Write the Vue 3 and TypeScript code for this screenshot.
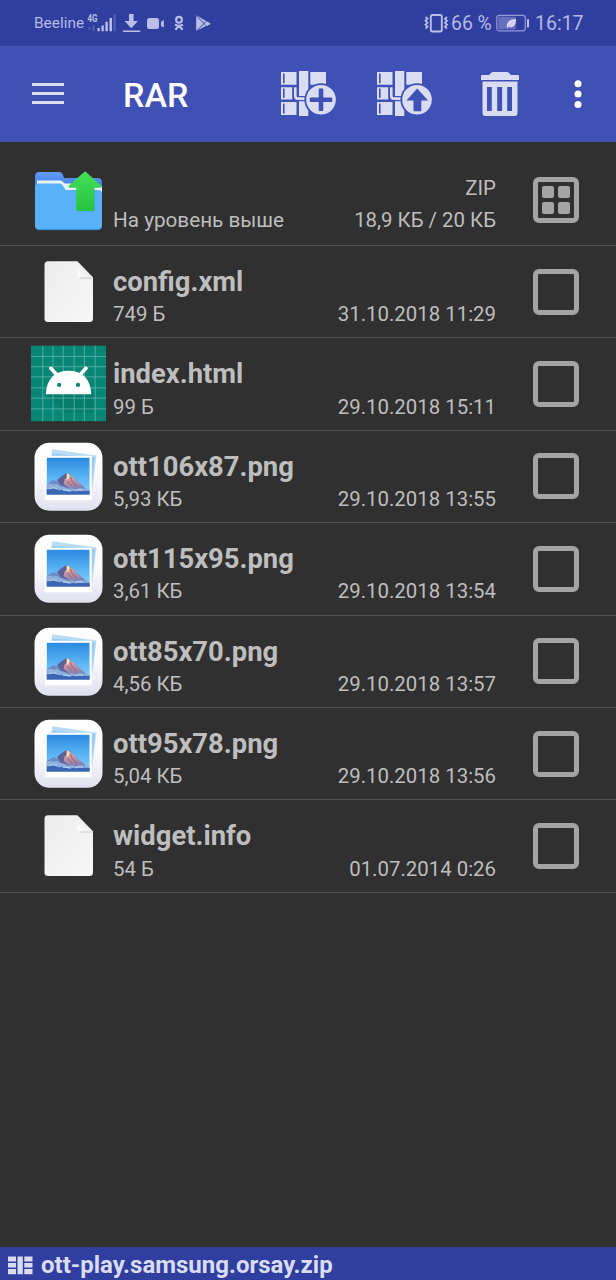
<script setup lang="ts">
type Kind = 'folder' | 'file' | 'android' | 'photo'

interface Entry {
  kind: Kind
  name: string
  size: string
  info: string
}

const entries: Entry[] = [
  { kind: 'file', name: 'config.xml', size: '749 Б', info: '31.10.2018 11:29' },
  { kind: 'android', name: 'index.html', size: '99 Б', info: '29.10.2018 15:11' },
  { kind: 'photo', name: 'ott106x87.png', size: '5,93 КБ', info: '29.10.2018 13:55' },
  { kind: 'photo', name: 'ott115x95.png', size: '3,61 КБ', info: '29.10.2018 13:54' },
  { kind: 'photo', name: 'ott85x70.png', size: '4,56 КБ', info: '29.10.2018 13:57' },
  { kind: 'photo', name: 'ott95x78.png', size: '5,04 КБ', info: '29.10.2018 13:56' },
  { kind: 'file', name: 'widget.info', size: '54 Б', info: '01.07.2014 0:26' },
]

const gridLines = [10.8, 21, 31.2, 42.2, 52.4, 63.2]
const archiveTools = ['add', 'extract']
</script>

<template>
  <div class="screen">
    <svg class="defs" width="0" height="0" aria-hidden="true">
      <defs>
        <linearGradient id="paper" x1="0" y1="0" x2="1" y2="1">
          <stop offset="0" stop-color="#ececec" /><stop offset="1" stop-color="#f7f7f7" />
        </linearGradient>
        <linearGradient id="fold" x1="0" y1="1" x2="1" y2="0">
          <stop offset="0" stop-color="#ffffff" /><stop offset="1" stop-color="#dcdcdc" />
        </linearGradient>
        <linearGradient id="tile" x1="0" y1="0" x2="0" y2="1">
          <stop offset="0" stop-color="#ffffff" /><stop offset="0.5" stop-color="#fafafd" /><stop offset="1" stop-color="#dfe0ee" />
        </linearGradient>
        <linearGradient id="sky" x1="0" y1="0" x2="0" y2="1">
          <stop offset="0" stop-color="#2b8ae0" /><stop offset="0.6" stop-color="#5fb8f6" /><stop offset="1" stop-color="#8accf8" />
        </linearGradient>
        <linearGradient id="peak" x1="0" y1="0" x2="0.2" y2="1">
          <stop offset="0" stop-color="#f3c795" /><stop offset="0.5" stop-color="#c793a0" /><stop offset="1" stop-color="#7d80b4" />
        </linearGradient>
        <linearGradient id="arrow" x1="0" y1="0" x2="0" y2="1">
          <stop offset="0" stop-color="#45e05a" /><stop offset="1" stop-color="#27c33f" />
        </linearGradient>
        <linearGradient id="folderBack" x1="0" y1="0" x2="0" y2="1">
          <stop offset="0" stop-color="#5f9dfb" /><stop offset="0.5" stop-color="#4d84e8" />
        </linearGradient>
      </defs>
    </svg>

    <header class="status">
      <span class="carrier">Beeline</span>
      <svg class="status-left" width="128" height="46" viewBox="86 0 128 46">
        <text x="87.5" y="21.5" class="net" textLength="10" lengthAdjust="spacingAndGlyphs">4G</text>
        <g fill="#b9bfe9">
          <path d="M97.5 28h2.3v3.3h-2.3zM101.5 25.5h2.3v5.8h-2.3zM105.4 21.8h2.4v9.5h-2.4zM109.5 18h2.5v13.3h-2.5z" />
          <path opacity=".25" d="M113.4 14h2.3v17.3h-2.3zM88.5 27h2v3h-2zM92.5 25.5h2v5.5h-2z" />
          <path d="M129 14h4.6v7h4.4l-6.8 7.3-6.7-7.3h4.5zM123 30.4h17.2v1.6H123z" />
          <rect x="147" y="18" width="12" height="11" rx="2.5" />
          <path d="M161 22.2q0-1 2.8-2.2v7.4q-2.8-1-2.8-2.2z" />
        </g>
        <g fill="none" stroke="#b9bfe9" stroke-width="2.1">
          <circle cx="179" cy="19.8" r="2.9" />
          <path d="M175 24.6q4 2.4 8 0M179 25.8l-3.6 3.9M179 25.8l3.6 3.9" />
        </g>
        <path fill="#b9bfe9" d="M196.2 15.6v15.5L210 24l-2.7-2.3-9.6-5.6z" />
        <path d="M196.5 16l9.8 9.8M196.5 31l9.5-9.5" stroke="#303e9f" stroke-width="1" />
        <path d="M207 21.5l3.7 2.3-3.7 2.3-2.4-2.3z" fill="#b9bfe9" />
      </svg>
      <div class="status-right">
        <svg width="27" height="22" viewBox="0 0 27 22" fill="none" stroke="#b9bfe9">
          <rect x="6.8" y="3" width="11" height="16.5" rx="1.7" stroke-width="1.9" />
          <path d="M1.5 5l2 1.7-2 2 2 2-2 2 2 2-2 2M23 5l-2 1.7 2 2-2 2 2 2-2 2 2 2" stroke-width="1.8" />
        </svg>
        <span class="percent">66 %</span>
        <svg class="battery" width="34" height="18" viewBox="0 0 34 18">
          <rect x=".8" y="1.3" width="28.5" height="15.5" rx="2.5" fill="none" stroke="#929bda" stroke-width="1.2" />
          <rect x="2.3" y="2.8" width="17.5" height="12.5" rx="1" fill="#6670bd" />
          <path d="M11 13.3c-1.2-5 3-8.3 9-8.3.2 6-2.7 9.5-7.4 7.7L11 14.5z" fill="#d5d9f5" />
          <path d="M12 13l5.5-5.7" stroke="#9ba2d8" stroke-width=".6" />
          <rect x="31" y="5" width="2" height="8.5" rx=".7" fill="#b9bfe9" />
        </svg>
        <span class="clock">16:17</span>
      </div>
    </header>

    <nav class="toolbar">
      <svg class="menu" width="32" height="24" viewBox="0 0 32 24"><path fill="#d9dcf2" d="M0 1h32v3H0zM0 10h32v3H0zM0 19h32v3H0z" /></svg>
      <h1>RAR</h1>
      <div class="tools">
        <svg v-for="tool in archiveTools" :key="tool" class="archive" width="56" height="48" viewBox="0 0 56 48">
          <g fill="#d9dcf2">
            <path d="M0 2h15.5v12.8H0zM18 1h9.3v45H18zM29.3 2H45v12.8H29.3zM0 17.2h11.3v12.3H0zM0 32h15.5v13H0z" />
            <path d="M2.8 3.5v9.8M2.8 18.5v9.5M2.8 33.5v10" stroke="#3f51b5" stroke-width="1.6" />
          </g>
          <g fill="none">
            <path d="M14.3 15.8V26q0 2.6 2.6 2.6H27.5" stroke="#3f51b5" stroke-width="5.4" />
            <path d="M14.3 17.2V26q0 2.6 2.6 2.6H25" stroke="#d9dcf2" stroke-width="2.6" />
          </g>
          <circle cx="40" cy="29.8" r="16.6" fill="#3f51b5" />
          <circle cx="40" cy="29.8" r="14.8" fill="#d9dcf2" />
          <path v-if="tool === 'add'" d="M38.7 18.5h2.6q1 0 1 1v8h8q1 0 1 1v2.6q0 1-1 1h-8v8q0 1-1 1h-2.6q-1 0-1-1v-8h-8q-1 0-1-1v-2.6q0-1 1-1h8v-8q0-1 1-1z" fill="#3f51b5" />
          <path v-else d="M40.2 18.5l10.9 12h-6.8v10.7h-7.8V30.5h-7z" fill="#3f51b5" />
        </svg>
        <svg class="trash" width="38" height="46" viewBox="0 0 38 46">
          <path fill="#d9dcf2" fill-rule="evenodd" d="M1 4h6.2q1.5 0 2.2-1.5T12 1h14q1.9 0 2.6 1.5T30.8 4H37q1 0 1 1v4H0V5q0-1 1-1zM1.5 10.5h35V42q0 3-3 3h-29q-3 0-3-3zM6 16v24h4.8V16zM16.2 16v24h4.9V16zM26.2 16v24H31V16z" />
        </svg>
        <svg class="more" width="8" height="28" viewBox="0 0 8 28" fill="#fff"><circle cx="4" cy="3.7" r="3.5" /><circle cx="4" cy="14" r="3.5" /><circle cx="4" cy="24.4" r="3.5" /></svg>
      </div>
    </nav>

    <main>
      <section class="row parent">
        <svg class="thumb" width="113" height="91" viewBox="0 0 113 91">
          <path d="M35 26V22.5q0-4.5 4.5-4.5H59q3 0 4 3l1 3h33.5q4.5 0 4.5 4.5V40H35z" fill="url(#folderBack)" />
          <path d="M37 26.5h24l4 3h33l4 3v8H37z" fill="#e8f3fc" />
          <path d="M35 33.5q0-4 4-4h20.5q2 0 3 1.7L65.8 36H98q4 0 4 4v31.5q0 4.3-4 4.3H39q-4 0-4-4.3z" fill="#58b2fa" />
          <path d="M36 73.5q1 2.1 3.5 2.1h58q2.5 0 3.7-2.1" fill="none" stroke="#3995df" />
          <path d="M86 18l16.3 14.5q0 1.5-1.5 1.5H95v21.5q0 1.7-1.7 1.7H78.6q-1.7 0-1.7-1.7V34h-6.5q-1.5 0-1-1.3z" fill="#288f65" opacity=".35" />
          <path d="M85 17.3l16.4 14.5q0 1.6-1.5 1.6H94v21.7q0 1.8-1.8 1.8H78q-1.8 0-1.8-1.8V33.4h-6.4q-1.8 0-1.1-1.6z" fill="url(#arrow)" />
        </svg>
        <span class="name"></span>
        <span class="type">ZIP</span>
        <span class="size">На уровень выше</span>
        <span class="info">18,9 КБ / 20 КБ</span>
        <span class="check all"><i v-for="n in 4" :key="n"></i></span>
      </section>

      <section v-for="entry in entries" :key="entry.name" class="row">
        <svg class="thumb" width="113" height="91" viewBox="0 0 113 91">
          <g v-if="entry.kind === 'file'">
            <path d="M48 15.3h29.2L93 31.5V72.5q0 3.5-3.5 3.5H48q-3.5 0-3.5-3.5V19q0-3.7 3.5-3.7z" fill="url(#paper)" />
            <path d="M77.2 15.3L93 31.5H80.2q-3 0-3-3z" fill="url(#fold)" />
            <path d="M79.5 32h13" stroke="#d2d2d2" stroke-width="1.2" />
          </g>
          <g v-else-if="entry.kind === 'android'" transform="translate(31 7.7)">
            <rect width="75" height="75.5" fill="#078675" />
            <path d="M15 48.5L33 67h29V47z" fill="#067d6c" />
            <g stroke="#61b5a9" stroke-width=".8">
              <path v-for="line in gridLines" :key="line" :d="`M${line + 1} 0v75.5M0 ${line}h75`" />
            </g>
            <path d="M14.8 48.5C15.5 33 24 25 37.6 25s22 8 22.7 23.5z" fill="#fff" />
            <path d="M19.8 22.6l7.5 8M55 22.6l-7.3 8" stroke="#fff" stroke-width="3.6" stroke-linecap="round" />
            <circle cx="28.2" cy="39.2" r="2.1" fill="#078675" /><circle cx="47" cy="39.2" r="2.1" fill="#078675" />
          </g>
          <g v-else>
            <rect x="34.5" y="11.8" width="68" height="68" rx="15" fill="url(#tile)" />
            <path d="M52 18.3l44.5 6.3-4.5 36H52z" fill="#b9dcf6" />
            <path d="M51.5 22.5l43.5 3.6-3 26H51.5z" fill="#9ccbf0" />
            <rect x="44.8" y="24.8" width="47" height="44.5" fill="#fff" />
            <rect x="46.8" y="26.8" width="42.7" height="36.6" fill="url(#sky)" />
            <path d="M46.8 53l6.5-4 4.2 1.5 4.3-4.5 5.2-4.3 4 3.5 3.5 1.8 3 4 4.8 3.4 3.5 3.6 3.7 1.5v3.9H46.8z" fill="#6d8cc4" />
            <path d="M60 49l3.5-4 3.5-3.3 4 3.5 3.5 1.8 3 4 4.8 3.4 3.5 3.6-12.5 1.5-8-4z" fill="url(#peak)" />
            <path d="M67 41.8l1 4.2-3.5 2.5-1 4.5 5 4-7.5-2.5-4-5.5 4.8-4z" fill="#5e6198" />
            <path d="M70.5 46l1.5 4.5 5 5M67.5 50l4.5 5" fill="none" stroke="#9f6c82" stroke-width="1.1" />
            <path d="M66.7 42.2l2.6 1.7-.4 3.6-2.3 1.5z" fill="#ffe3aa" />
            <path d="M46.8 53.5q4-1.5 7 .2 3-2 6 1.2 5 .5 8 3.2 4-1.5 8 .3 5-2 8-.6 3-.5 5.7.5v5.1H46.8z" fill="#8fb0df" />
            <path d="M46.8 58.5q7-2.5 12 .8 6-1 10 1.5 8-2 20.7-.7v3.3H46.8z" fill="#3a66b4" />
            <path d="M49 58q4-2.3 8-.3M63 59.5q4-1 6.5.5M75 60q4-2 8-.5" fill="none" stroke="#b5d0ef" stroke-width="1.2" />
          </g>
        </svg>
        <span class="name">{{ entry.name }}</span>
        <span class="type"></span>
        <span class="size">{{ entry.size }}</span>
        <span class="info">{{ entry.info }}</span>
        <span class="check"></span>
      </section>
    </main>

    <footer>
      <svg width="25" height="19" viewBox="0 0 25 19" fill="#d9dcf2"><path d="M0 .5h8v5H0zM0 7h8v4.5H0zM0 13h8v5.3H0zM9.5.5h5.3v17.8H9.5zM16.3.5h8.2v5h-8.2zM16.3 7h8.2v4.5h-8.2zM16.3 13h8.2v5.3h-8.2z" /></svg>
      <span>ott-play.samsung.orsay.zip</span>
    </footer>
  </div>
</template>

<style>
body {
  background: #303030;
}
</style>

<style scoped>
.screen {
  display: flex;
  flex-direction: column;
  width: 616px;
  height: 1280px;
  background: #303030;
  color: #bebebe;
  font-family: Roboto, "Noto Sans", sans-serif;
  overflow: hidden;
}
svg {
  display: block;
  flex: none;
}
.defs {
  height: 0;
}
.status {
  display: flex;
  align-items: center;
  height: 46px;
  flex: none;
  padding: 0 34px;
  background: #303e9f;
  color: #b4bae6;
}
.carrier {
  width: 52px;
  font-size: 15.4px;
  white-space: nowrap;
}
.net {
  font-size: 10.5px;
  font-weight: 700;
  fill: #b9bfe9;
}
.status-right {
  display: flex;
  align-items: center;
  margin-left: auto;
}
.percent {
  width: 45px;
  font-size: 19.4px;
  white-space: nowrap;
}
.clock {
  width: 47px;
  margin-left: 5px;
  font-size: 19.5px;
}
.toolbar {
  display: flex;
  align-items: center;
  height: 96px;
  flex: none;
  box-sizing: border-box;
  padding: 0 34px 0 32px;
  background: #3f51b5;
}
h1 {
  margin: 1px 0 0 59px;
  color: #fff;
  font-size: 34px;
  font-weight: 500;
  line-height: 40px;
}
.tools {
  display: flex;
  align-items: center;
  margin-left: auto;
}
.archive {
  margin-right: 40px;
}
.trash {
  margin-left: 8px;
}
.more {
  margin-left: 55px;
}
main {
  flex: 1;
  padding-top: 11.5px;
}
.row {
  display: grid;
  grid-template-columns: 113px 1fr auto 83px;
  grid-template-rows: 54px 1fr;
  box-sizing: border-box;
  height: 92.43px;
  padding-right: 37px;
  border-bottom: 1.5px solid #555;
  font-size: 20.4px;
}
.parent {
  grid-template-rows: 46px 1fr;
}
.thumb {
  grid-row: 1 / 3;
}
.name,
.size,
.type,
.info {
  white-space: nowrap;
  line-height: 24px;
}
.name {
  grid-column: 2;
  padding-top: 19px;
  font-size: 27.4px;
  line-height: 34px;
  font-weight: 700;
}
.type {
  grid-column: 3;
  padding-top: 22.3px;
  text-align: right;
}
.size {
  grid-column: 2;
  grid-row: 2;
  padding-top: 2.3px;
}
.info {
  grid-column: 3;
  grid-row: 2;
  padding-top: 2.3px;
  text-align: right;
}
.parent .size,
.parent .info {
  padding-top: 8.3px;
}
.parent .size {
  font-size: 20.7px;
}
.check {
  grid-column: 4;
  grid-row: 1 / 3;
  justify-self: end;
  box-sizing: border-box;
  width: 46px;
  height: 46px;
  margin-top: 22.7px;
  border: 5px solid #a4a4a4;
  border-radius: 6px;
}
.all {
  display: grid;
  grid-template-columns: 12px 12px;
  grid-template-rows: 12px 12px;
  gap: 4px;
  margin-top: 23.5px;
  place-content: center;
}
.all i {
  border-radius: 2px;
  background: #a4a4a4;
}
footer {
  display: flex;
  align-items: center;
  gap: 8px;
  height: 33px;
  flex: none;
  box-sizing: border-box;
  padding: 3px 8px 0;
  background: #303e9f;
  color: #d9dcf2;
  font-size: 24px;
  font-weight: 700;
}
</style>
